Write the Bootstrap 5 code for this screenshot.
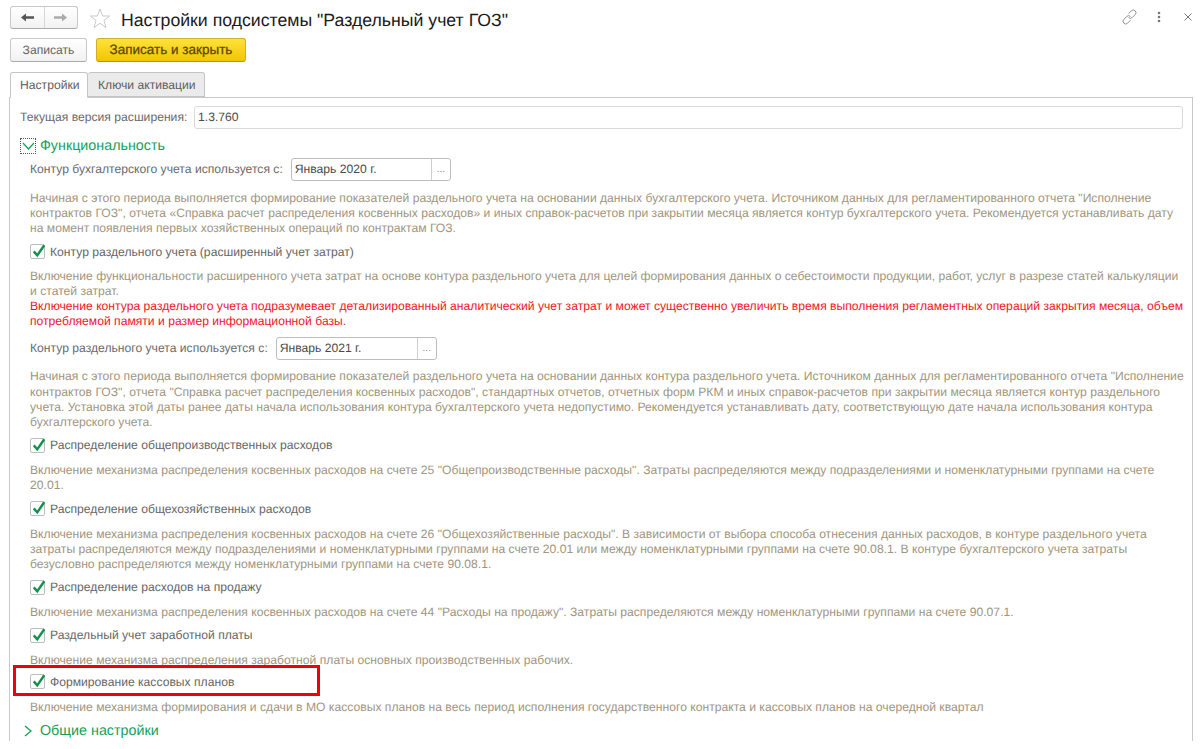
<!DOCTYPE html>
<html lang="ru">
<head>
<meta charset="utf-8">
<title>Настройки подсистемы</title>
<link href="https://cdn.jsdelivr.net/npm/bootstrap@5.3.0/dist/css/bootstrap.min.css" rel="stylesheet">
<style>
html,body{height:749px;overflow:hidden;background:#fff}
body{font-family:"Liberation Sans",Arial,sans-serif;font-size:12.15px;color:#4b4b4b;line-height:15px;position:relative;text-rendering:geometricPrecision}
.head-row{height:36px;padding:6px 8px 0 10px}
.nav-pair{width:68px;height:23px;border:1px solid #c8c8c8;border-bottom-color:#aaa;border-radius:3px;background:linear-gradient(#fff,#f2f2f2)}
.nav-pair>span{flex:1;height:100%}
.nav-pair>span+span{border-left:1px solid #d6d6d6}
.star-ico{margin-left:11px;margin-top:1px}
.title-text{font-size:17.7px;color:#1a1a1a;margin-left:10px;margin-top:3px;line-height:22px;white-space:nowrap}
.tool-icons{gap:19px;margin-top:2px}
.close-ico{margin-left:4px}
.btn-row{height:26px;margin-left:10px;margin-top:2px;gap:9px}
.act-btn{height:24px;width:77px;text-align:center;border:1px solid #c9c9c9;border-bottom-color:#a9a9a9;border-radius:3px;background:linear-gradient(#fff,#f1f1f1);color:#666;line-height:22px}
.act-prim{background:linear-gradient(#fde23b,#f2c500);border-color:#d0ae27;border-bottom-color:#b39415;color:#5b4700;width:150px;-webkit-text-stroke:.25px #5b4700;font-size:13.5px}
.tab-row{margin:8px 0 0 10px;height:25px;position:relative;z-index:1}
.tab-item{border:1px solid #c4c4c4;height:25px;line-height:24px;color:#5e5e5e;border-radius:3px 3px 0 0}
.tab-on{background:#fff;width:78px;padding-left:9px;border-bottom:1px solid #fff;height:26px}
.tab-off{background:#ebebeb;width:117px;border-left:0;padding-left:10px}
.pane{margin:0 0 0 9px;width:1184px;height:644px;border:1px solid #c9c9c9;border-bottom:0;padding:8px 0 0 10px;color:#6a6a6a}
.ver-row{height:23px}
.ver-label{width:174px;white-space:nowrap}
.field{border:1px solid #d9d9d9;border-radius:3px;height:23px;color:#4a4a4a;padding-left:3px;line-height:21px;background:#fff}
.ver-field{width:989px}
.grp{height:20px;margin-top:7px;font-size:14.3px;color:#15a05a;line-height:20px}
.grp-box{width:16px;height:16px;border:1px dotted #555;margin-right:4px}
.field-row{height:23px;margin-left:10px;margin-top:2px;white-space:nowrap}
.date-box{height:23px;border:1px solid #bdbdbd;border-radius:3px;margin-left:8px;line-height:21px;color:#4a4a4a;padding-left:3px}
.date-box .dots{width:19px;border-left:1px solid #cfcfcf;text-align:center;color:#888;font-size:10px;margin-left:auto;height:21px;line-height:22px}
.box-a{width:160px}
.box-b{width:161px}
.hint{margin-left:10px;color:#a0957e;white-space:nowrap;line-height:15.2px;margin-top:8px}
.hint-wide{margin-top:10px}
.hint-mid{margin-top:9px}
.hint-alert{margin-top:7px}
.alarm{color:#f0141e}
.chk-row{height:20px;margin-left:10px;line-height:20px;color:#666;margin-top:5px}
.chk-tight{margin-top:3px}
.hint-last{margin-top:8px}
.chk-mark{width:15px;height:15px;border:1px solid #bdbdbd;border-radius:2px;margin-right:5px;background:#fff;position:relative;flex:none}
.chk-mark svg{position:absolute;left:1px;top:-1px}
.field-second{margin-top:8px}
.red-frame{position:absolute;left:13px;top:665px;width:307px;height:31px;border:3px solid #f00000;pointer-events:none}
.grp-last{margin-top:6px}
</style>
</head>
<body>
<div class="head-row d-flex align-items-start">
  <div class="nav-pair d-flex">
    <span class="d-flex align-items-center justify-content-center"><svg width="15" height="11" viewBox="0 0 15 11"><path d="M1 5.5 6 1.5V4.3H14V6.7H6V9.5Z" fill="#555"/></svg></span>
    <span class="d-flex align-items-center justify-content-center"><svg width="15" height="11" viewBox="0 0 15 11"><path d="M14 5.5 9 1.5V4.3H1V6.7H9V9.5Z" fill="#aaa"/></svg></span>
  </div>
  <svg class="star-ico" width="22" height="23" viewBox="0 0 22 23"><path d="M11 2 13.6 9H20.6L15 13.4 17 20.5 11 16.3 5 20.5 7 13.4 1.4 9H8.4Z" fill="#fff" stroke="#c9c9c9"/></svg>
  <div class="title-text">Настройки подсистемы "Раздельный учет ГОЗ"</div>
  <div class="tool-icons d-flex align-items-center ms-auto">
    <svg width="17" height="18" viewBox="0 0 18 18" fill="none" stroke="#8a8a8a" stroke-width="1"><path d="M8 5.5 11 2.5a2.8 2.8 0 0 1 4 4L12 9.5a2.8 2.8 0 0 1-4 0"/><path d="M10 12.5 7 15.5a2.8 2.8 0 0 1-4-4L6 8.5a2.8 2.8 0 0 1 4 0"/></svg>
    <svg width="4" height="12" viewBox="0 0 4 12"><circle cx="2" cy="2" r="1.3" fill="#777"/><circle cx="2" cy="6" r="1.3" fill="#777"/><circle cx="2" cy="10" r="1.3" fill="#777"/></svg>
    <svg class="close-ico" width="8" height="8" viewBox="0 0 8 8" stroke="#777" stroke-width="1"><path d="M.5.5 7.5 7.5M7.5.5 .5 7.5"/></svg>
  </div>
</div>
<div class="btn-row d-flex">
  <div class="act-btn">Записать</div>
  <div class="act-btn act-prim">Записать и закрыть</div>
</div>
<div class="tab-row d-flex align-items-start">
  <div class="tab-item tab-on">Настройки</div>
  <div class="tab-item tab-off">Ключи активации</div>
</div>
<div class="pane">
  <div class="ver-row d-flex align-items-center"><span class="ver-label">Текущая версия расширения:</span><div class="field ver-field">1.3.760</div></div>
  <div class="grp d-flex align-items-center"><span class="grp-box d-flex align-items-center justify-content-center"><svg width="13" height="8" viewBox="0 0 13 8" fill="none" stroke="#15a05a" stroke-width="1.2"><path d="M1 1 6.5 7 12 1"/></svg></span>Функциональность</div>
  <div class="field-row d-flex align-items-center">Контур бухгалтерского учета используется с:<div class="date-box box-a d-flex">Январь 2020 г.<span class="dots">...</span></div></div>
  <div class="hint hint-wide">Начиная с этого периода выполняется формирование показателей раздельного учета на основании данных бухгалтерского учета. Источником данных для регламентированного отчета "Исполнение<br>контрактов ГОЗ", отчета «Справка расчет распределения косвенных расходов» и иных справок-расчетов при закрытии месяца является контур бухгалтерского учета. Рекомендуется устанавливать дату<br>на момент появления первых хозяйственных операций по контрактам ГОЗ.</div>
  <div class="chk-row d-flex align-items-center"><span class="chk-mark"><svg width="14" height="14" viewBox="0 0 16 16"><path d="M2 8.5 6 13 14 1.5" fill="none" stroke="#12924a" stroke-width="2.8"/></svg></span>Контур раздельного учета (расширенный учет затрат)</div>
  <div class="hint hint-alert">Включение функциональности расширенного учета затрат на основе контура раздельного учета для целей формирования данных о себестоимости продукции, работ, услуг в разрезе статей калькуляции<br>и статей затрат.<br><span class="alarm">Включение контура раздельного учета подразумевает детализированный аналитический учет затрат и может существенно увеличить время выполнения регламентных операций закрытия месяца, объем<br>потребляемой памяти и размер информационной базы.</span></div>
  <div class="field-row field-second d-flex align-items-center">Контур раздельного учета используется с:<div class="date-box box-b d-flex">Январь 2021 г.<span class="dots">...</span></div></div>
  <div class="hint hint-mid">Начиная с этого периода выполняется формирование показателей раздельного учета на основании данных контура раздельного учета. Источником данных для регламентированного отчета "Исполнение<br>контрактов ГОЗ", отчета "Справка расчет распределения косвенных расходов", стандартных отчетов, отчетных форм РКМ и иных справок-расчетов при закрытии месяца является контур раздельного<br>учета. Установка этой даты ранее даты начала использования контура бухгалтерского учета недопустимо. Рекомендуется устанавливать дату, соответствующую дате начала использования контура<br>бухгалтерского учета.</div>
  <div class="chk-row d-flex align-items-center"><span class="chk-mark"><svg width="14" height="14" viewBox="0 0 16 16"><path d="M2 8.5 6 13 14 1.5" fill="none" stroke="#12924a" stroke-width="2.8"/></svg></span>Распределение общепроизводственных расходов</div>
  <div class="hint">Включение механизма распределения косвенных расходов на счете 25 "Общепроизводственные расходы". Затраты распределяются между подразделениями и номенклатурными группами на счете<br>20.01.</div>
  <div class="chk-row d-flex align-items-center"><span class="chk-mark"><svg width="14" height="14" viewBox="0 0 16 16"><path d="M2 8.5 6 13 14 1.5" fill="none" stroke="#12924a" stroke-width="2.8"/></svg></span>Распределение общехозяйственных расходов</div>
  <div class="hint">Включение механизма распределения косвенных расходов на счете 26 "Общехозяйственные расходы". В зависимости от выбора способа отнесения данных расходов, в контуре раздельного учета<br>затраты распределяются между подразделениями и номенклатурными группами на счете 20.01 или между номенклатурными группами на счете 90.08.1. В контуре бухгалтерского учета затраты<br>безусловно распределяются между номенклатурными группами на счете 90.08.1.</div>
  <div class="chk-row d-flex align-items-center"><span class="chk-mark"><svg width="14" height="14" viewBox="0 0 16 16"><path d="M2 8.5 6 13 14 1.5" fill="none" stroke="#12924a" stroke-width="2.8"/></svg></span>Распределение расходов на продажу</div>
  <div class="hint">Включение механизма распределения косвенных расходов на счете 44 "Расходы на продажу". Затраты распределяются между номенклатурными группами на счете 90.07.1.</div>
  <div class="chk-row d-flex align-items-center"><span class="chk-mark"><svg width="14" height="14" viewBox="0 0 16 16"><path d="M2 8.5 6 13 14 1.5" fill="none" stroke="#12924a" stroke-width="2.8"/></svg></span>Раздельный учет заработной платы</div>
  <div class="hint">Включение механизма распределения заработной платы основных производственных рабочих.</div>
  <div class="chk-row chk-tight d-flex align-items-center"><span class="chk-mark"><svg width="14" height="14" viewBox="0 0 16 16"><path d="M2 8.5 6 13 14 1.5" fill="none" stroke="#12924a" stroke-width="2.8"/></svg></span>Формирование кассовых планов</div>
  <div class="hint hint-last">Включение механизма формирования и сдачи в МО кассовых планов на весь период исполнения государственного контракта и кассовых планов на очередной квартал</div>
  <div class="grp grp-last d-flex align-items-center"><span class="grp-box border-0 d-flex align-items-center justify-content-center"><svg width="8" height="12" viewBox="0 0 8 12" fill="none" stroke="#15a05a" stroke-width="1.3"><path d="M1 1 7 6 1 11"/></svg></span>Общие настройки</div>
</div>
<div class="red-frame"></div>
</body>
</html>
